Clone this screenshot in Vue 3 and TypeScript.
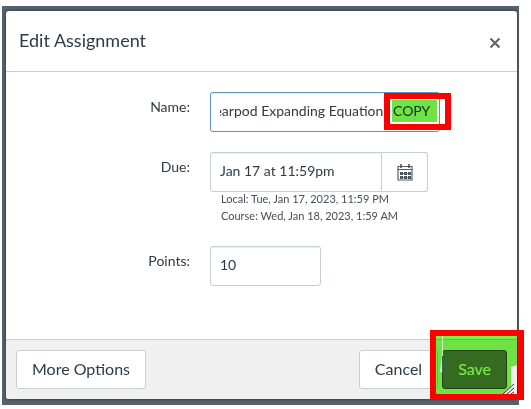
<script setup lang="ts">
import { nextTick, onMounted, ref } from 'vue'

const name = ref('Nearpod Expanding Equations COPY')
const due = ref('Jan 17 at 11:59pm')
const points = ref('10')
const nameInput = ref<HTMLInputElement | null>(null)

const columns = [3, 7, 11]
const rows = [8, 12]

onMounted(async () => {
  await nextTick()
  await document.fonts.ready
  // Keep the end of a long assignment name in view
  if (nameInput.value) nameInput.value.scrollLeft = nameInput.value.scrollWidth
})
</script>

<template>
  <div class="backdrop">
    <form class="dialog" role="dialog" aria-labelledby="dialog-title" @submit.prevent>
      <header class="header">
        <h1 id="dialog-title">Edit Assignment</h1>
        <button type="button" class="close" aria-label="Close">
          <svg width="12" height="12" viewBox="0 0 12 12" aria-hidden="true">
            <path d="M1.500 1.500 10.500 10.500M10.500 1.500 1.500 10.500" fill="none" stroke="#666" stroke-width="2.2" />
          </svg>
        </button>
      </header>

      <div class="fields">
        <label for="name">Name:</label>
        <div class="control name-control">
          <input id="name" ref="nameInput" v-model="name" type="text" class="focused" />
          <span class="mark mark-name"><span class="tint"></span></span>
        </div>

        <label for="due">Due:</label>
        <div class="control">
          <div class="date-group">
            <input id="due" v-model="due" type="text" />
            <button type="button" class="calendar" aria-label="Choose a date">
              <svg width="16" height="17" viewBox="0 0 16 17" aria-hidden="true">
                <path d="M1 2.500h14v13.500H1z" fill="#fff" stroke="#535d66" stroke-width="1.2" />
                <path d="M1 5.500h14" stroke="#535d66" />
                <path d="M4 0v4M12 0v4" stroke="#3c4650" stroke-width="1.4" />
                <path d="M3 9.500h11M3 13.500h11" stroke="#8a939b" />
                <template v-for="y in rows" :key="y">
                  <rect v-for="x in columns" :key="x" :x="x" :y="y" width="3" height="3" fill="#4a5560" />
                </template>
              </svg>
            </button>
          </div>
          <p class="hint">Local: Tue, Jan 17, 2023, 11:59 PM<br />Course: Wed, Jan 18, 2023, 1:59 AM</p>
        </div>

        <label for="points">Points:</label>
        <div class="control">
          <input id="points" v-model="points" type="text" class="points" />
        </div>
      </div>

      <footer class="footer">
        <button type="button" class="btn more">More Options</button>
        <button type="button" class="btn">Cancel</button>
        <div class="save-wrap">
          <button type="submit" class="btn save">Save</button>
          <span class="mark mark-save">
            <span class="tint"></span>
            <svg class="details" width="82" height="58" viewBox="0 0 82 58" aria-hidden="true">
              <path d="M6.500 0v20" stroke="#c5f3b5" />
              <path d="M6 20 4 36h3z" fill="#eef5eb" />
              <path d="M6 20h2v17H6z" fill="#345b60" />
              <path d="M75 31 81 29v29H68l7-8z" fill="#efefef" />
              <path d="M67 58 78 48M71 58 78 52M75 58 78 56" stroke="#333" fill="none" />
            </svg>
          </span>
        </div>
      </footer>
    </form>
  </div>
</template>

<style>
body {
  background: #fff;
}
</style>

<style scoped>
* {
  box-sizing: border-box;
}

.backdrop {
  margin: 6px 12px 4px 2px;
  padding: 5px 2px 6px 4px;
  background: #56626c;
  font-family: Lato, "Liberation Sans", sans-serif;
  font-size: 16px;
  line-height: 20px;
  color: #2d3b45;
}

.dialog {
  background: #fff;
  border-radius: 3px;
  box-shadow: 0 0 3px #1f2a33;
}

.header {
  display: flex;
  align-items: center;
  justify-content: space-between;
  height: 61px;
  padding: 0 16px 2px 13px;
  border-bottom: 1px solid #c7cdd1;
}

h1 {
  margin: 0;
  font-size: 18px;
  font-weight: 400;
  line-height: 24px;
}

.close {
  display: flex;
  margin-top: 6px;
  padding: 0;
  border: 0;
  background: none;
}

.fields {
  display: grid;
  grid-template-columns: 184px 1fr;
  column-gap: 20px;
  padding: 20px 20px 53px 0;
}

label {
  padding-top: 5px;
  font-size: 14px;
  text-align: right;
}

.control {
  position: relative;
  justify-self: start;
}

input {
  display: block;
  width: 100%;
  height: 40px;
  margin: 0;
  padding: 0 9px 3px;
  border: 1px solid #c7cdd1;
  border-radius: 3px;
  outline: 0;
  background: #fff;
  box-shadow: inset 0 1px 1px #eee;
  font: inherit;
  font-size: 14px;
  color: inherit;
}

.name-control {
  width: 230px;
  margin-bottom: 20px;
}

.focused {
  border-color: #5c95b8;
}

.date-group {
  display: flex;
  width: 218px;
}

.date-group input {
  flex: 1;
  min-width: 0;
  border-radius: 3px 0 0 3px;
}

.calendar {
  display: flex;
  align-items: center;
  justify-content: center;
  width: 46px;
  padding: 0;
  border: 1px solid #c7cdd1;
  border-left: 0;
  border-radius: 0 3px 3px 0;
  background: #fff;
}

.hint {
  margin: -2px 0 22px;
  padding-left: 11px;
  font-size: 11px;
  line-height: 17px;
  color: #444f58;
}

.points {
  width: 111px;
}

.footer {
  display: flex;
  align-items: center;
  height: 60px;
  padding: 0 10px;
  border-top: 1px solid #c7cdd1;
  border-radius: 0 0 3px 3px;
  background: #f0f0f0;
}

.btn {
  height: 39px;
  padding: 0 15px 2px;
  border: 1px solid #c7cdd1;
  border-radius: 3px;
  background: #fff;
  font: inherit;
  color: inherit;
}

.more {
  margin-right: auto;
}

.save-wrap {
  position: relative;
  margin-left: 4px;
}

.save {
  border-color: #464646;
  background: #717171;
  color: #fff;
}

/* Highlighter boxes drawn over the dialog */
.mark {
  position: absolute;
  border: 6px solid #f00;
  pointer-events: none;
}

.mark-name {
  top: 1px;
  right: -11px;
  width: 67px;
  height: 37px;
}

.mark-save {
  top: -20px;
  right: -17px;
  width: 94px;
  height: 70px;
}

.tint {
  position: absolute;
  inset: 0;
  background: #6fe346;
  mix-blend-mode: multiply;
}

.mark-name .tint {
  inset: 1px 8px 2px 2px;
}

.mark-save .tint {
  background: #76f14a;
}

.details {
  position: absolute;
  inset: 0;
}
</style>
